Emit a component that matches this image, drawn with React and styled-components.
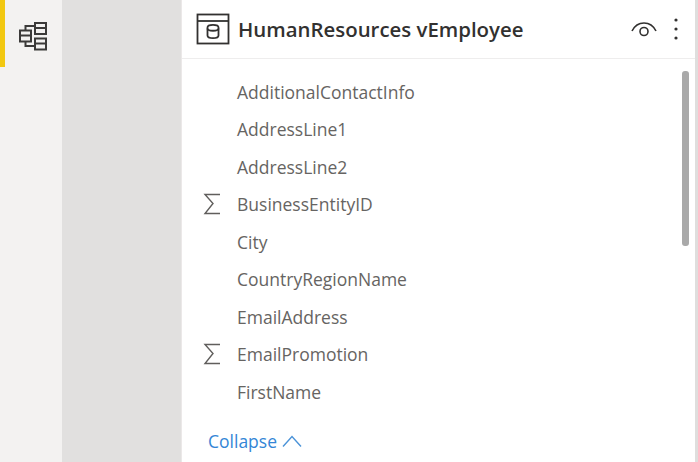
import styled, { createGlobalStyle } from "styled-components";

const fields = [
  { name: "AdditionalContactInfo" },
  { name: "AddressLine1" },
  { name: "AddressLine2" },
  { name: "BusinessEntityID", sum: true },
  { name: "City" },
  { name: "CountryRegionName" },
  { name: "EmailAddress" },
  { name: "EmailPromotion", sum: true },
  { name: "FirstName" },
];

const ModelIcon = () => (
  <svg width="30" height="30" viewBox="0 0 30 30" fill="none" stroke="#3b3a39" strokeWidth="2">
    <rect x="2" y="9.500" width="11" height="11" />
    <path d="M2 14.500h11" />
    <rect x="17" y="2" width="11" height="11" />
    <path d="M17 7h11" />
    <rect x="17" y="17.500" width="11" height="11" />
    <path d="M17 22.500h11" />
    <path d="M7.500 9.500V5h9.500M7.500 20.500V25h9.500" />
  </svg>
);

const TableIcon = () => (
  <svg width="34" height="32" viewBox="0 0 34 32" fill="none" stroke="#323130" strokeWidth="1.800">
    <rect x="1.500" y="1.500" width="31" height="29" />
    <path d="M1.500 8h31" />
    <path d="M11.500 14.500c0-3.400 11-3.400 11 0v8c0 3.600-11 3.600-11 0z" />
    <path d="M11.500 15.500c0 3 11 3 11 0" />
  </svg>
);

const EyeIcon = () => (
  <svg width="28" height="18" viewBox="0 0 28 18" fill="none" stroke="#323130" strokeWidth="1.600">
    <path d="M2 11C5 5 9 3 14 3s9 2 12 8" />
    <circle cx="14" cy="11.500" r="4" />
  </svg>
);

const MoreIcon = () => (
  <svg width="6" height="24" viewBox="0 0 6 24" fill="#323130">
    <circle cx="3" cy="3" r="1.600" />
    <circle cx="3" cy="12" r="1.600" />
    <circle cx="3" cy="21" r="1.600" />
  </svg>
);

const SumIcon = () => (
  <svg width="18" height="22" viewBox="0 0 18 22" fill="none" stroke="#605e5c" strokeWidth="1.400">
    <path d="M17 1.500H2l8 9-8 10h15" />
  </svg>
);

const ChevronUp = () => (
  <svg width="20" height="12" viewBox="0 0 20 12" fill="none" stroke="#4b93d8" strokeWidth="1.400">
    <path d="M1 11.500L10 1.500 19 11.500" />
  </svg>
);

const App = () => {
  return (
    <>
      <GlobalStyle />
      <Page>
        <Rail>
          <RailTab>
            <ModelIcon />
          </RailTab>
        </Rail>
        <Canvas />
        <Panel>
          <Header>
            <TableIcon />
            <Title>HumanResources vEmployee</Title>
            <HeaderActions>
              <EyeIcon />
              <MoreIcon />
            </HeaderActions>
          </Header>
          <Body>
            <FieldList>
              {fields.map((field) => (
                <FieldRow key={field.name}>
                  <SumSlot>{field.sum && <SumIcon />}</SumSlot>
                  <FieldName>{field.name}</FieldName>
                </FieldRow>
              ))}
            </FieldList>
            <Collapse>
              Collapse
              <ChevronUp />
            </Collapse>
            <ScrollThumb />
          </Body>
        </Panel>
        <Edge />
      </Page>
    </>
  );
};

export default App;

const GlobalStyle = createGlobalStyle`
  html, body {
    margin: 0;
    padding: 0;
    background: #fff;
  }
  body {
    font-family: "Open Sans", "Liberation Sans", sans-serif;
  }
`;

const Page = styled.div`
  display: flex;
  width: 698px;
  height: 462px;
  overflow: hidden;
`;

const Rail = styled.div`
  width: 62px;
  flex: none;
  background: #f3f2f1;
`;

const RailTab = styled.div`
  display: flex;
  align-items: center;
  height: 67px;
  padding: 5px 0 0 13px;
  border-left: 5px solid #f2c811;
  box-sizing: border-box;
`;

const Canvas = styled.div`
  width: 119px;
  flex: none;
  background: #e1e0df;
`;

const Panel = styled.div`
  flex: 1;
  display: flex;
  flex-direction: column;
  background: #fff;
  border-left: 1px solid #ebe8e8;
`;

const Edge = styled.div`
  width: 3px;
  flex: none;
  background: #dfdedd;
`;

const Header = styled.div`
  display: flex;
  align-items: center;
  gap: 8px;
  height: 58px;
  flex: none;
  padding: 0 16px 0 14px;
  border-bottom: 1px solid #eeeded;
`;

const Title = styled.div`
  font-size: 20.400px;
  font-weight: 600;
  color: #323130;
`;

const HeaderActions = styled.div`
  margin-left: auto;
  display: flex;
  align-items: center;
  gap: 15px;
`;

const Body = styled.div`
  position: relative;
  flex: 1;
  display: flex;
  flex-direction: column;
`;

const FieldList = styled.div`
  display: flex;
  flex-direction: column;
  padding-top: 14px;
`;

const FieldRow = styled.div`
  display: flex;
  align-items: center;
  height: 37.500px;
`;

const SumSlot = styled.div`
  width: 55px;
  flex: none;
  display: flex;
  justify-content: flex-end;
  padding-right: 16px;
  box-sizing: border-box;
`;

const FieldName = styled.div`
  font-size: 17.500px;
  color: #666462;
`;

const Collapse = styled.div`
  display: flex;
  align-items: center;
  gap: 5px;
  margin: 18px 0 0 26px;
  font-size: 17.500px;
  color: #3486d6;
`;

const ScrollThumb = styled.div`
  position: absolute;
  top: 12px;
  right: 6px;
  width: 7px;
  height: 175px;
  border-radius: 3px;
  background: #a9a9a9;
`;
